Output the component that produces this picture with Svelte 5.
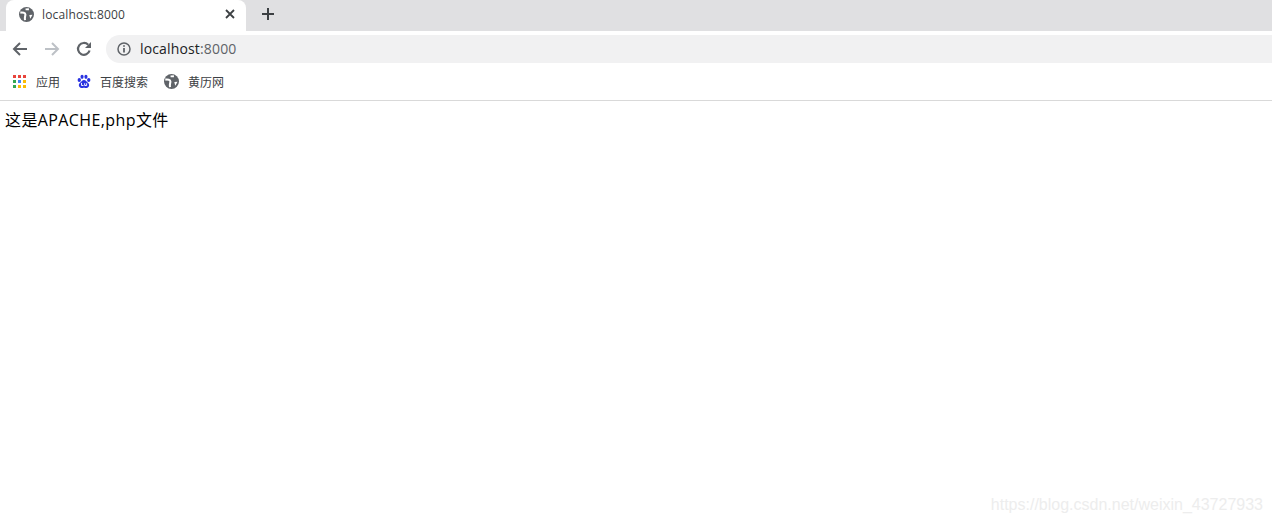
<script>
  const dots = ['#e8453c','#e8453c','#e8453c','#34a853','#4285f4','#fbbc05','#34a853','#fbbc05','#fbbc05'];
</script>

{#snippet globe(size)}
  <svg class="icon" width={size} height={size} viewBox="0 0 16 16">
    <circle cx="8" cy="8" r="8" fill="#5f6368"/>
    <path d="M1.4 6 C4 5.6 6.8 6 6.8 8 C6.8 10 5.8 10.6 6.4 14" stroke="#fff" stroke-width="2.2" fill="none"/>
    <path d="M7 2.6 L10.6 2.4" stroke="#fff" stroke-width="2" fill="none"/>
    <path d="M11 8.6 L14.4 8.2 L12 12.6 Z" fill="#fff"/>
  </svg>
{/snippet}

<div class="browser">
  <div class="tabstrip">
    <div class="tab">
      {@render globe(15)}
      <span class="tabtitle">localhost:8000</span>
      <svg class="close" width="10" height="10" viewBox="0 0 10 10">
        <path d="M1 1 L9 9 M9 1 L1 9" stroke="#3c4043" stroke-width="1.8" fill="none"/>
      </svg>
    </div>
    <svg class="plus" width="12" height="12" viewBox="0 0 12 12">
      <path d="M6 0 V12 M0 6 H12" stroke="#3c4043" stroke-width="2" fill="none"/>
    </svg>
  </div>

  <div class="toolbar">
    <svg class="nav" width="16" height="16" viewBox="0 0 16 16">
      <path d="M15 8 H2 M8 2 L2 8 L8 14" stroke="#5f6368" stroke-width="2" fill="none"/>
    </svg>
    <svg class="nav" width="16" height="16" viewBox="0 0 16 16">
      <path d="M1 8 H14 M8 2 L14 8 L8 14" stroke="#bdc1c6" stroke-width="2" fill="none"/>
    </svg>
    <svg class="nav" width="16" height="16" viewBox="0 0 16 16">
      <path d="M13.6 9.5 A5.9 5.9 0 1 1 12.2 3.8" stroke="#5f6368" stroke-width="2.2" fill="none"/>
      <path d="M15 1 V7 H9 Z" fill="#5f6368"/>
    </svg>
    <div class="omnibox">
      <svg width="14" height="14" viewBox="0 0 14 14">
        <circle cx="7" cy="7" r="6" stroke="#5f6368" stroke-width="1.5" fill="none"/>
        <path d="M7 6 V10.6" stroke="#5f6368" stroke-width="1.8"/>
        <path d="M7 3.2 V4.8" stroke="#5f6368" stroke-width="1.8"/>
      </svg>
      <span class="url">localhost<span class="port">:8000</span></span>
    </div>
  </div>

  <div class="bookmarks">
    <div class="bm apps">
      <div class="grid">
        {#each dots as c}<i style:background={c}></i>{/each}
      </div>
      <span>应用</span>
    </div>
    <div class="bm baidu">
      <svg width="14" height="15" viewBox="0 0 16 16">
        <g fill="#2932e1">
          <ellipse cx="2.6" cy="6.4" rx="1.9" ry="2.3"/>
          <ellipse cx="5.8" cy="2.6" rx="1.8" ry="2.4"/>
          <ellipse cx="10.2" cy="2.6" rx="1.8" ry="2.4"/>
          <ellipse cx="13.4" cy="6.4" rx="1.9" ry="2.3"/>
          <path d="M8 6.4 C10 6.4 10.8 8.4 12.8 9.8 C15 11.6 13.6 15.6 10.8 15.4 C9.4 15.3 8.8 15 8 15 C7.2 15 6.6 15.3 5.2 15.4 C2.4 15.6 1 11.6 3.2 9.8 C5.2 8.4 6 6.4 8 6.4 Z"/>
        </g>
        <path d="M5.2 9.6 V12.6 H7.4 M8.8 10 V12.6 H11 V10" stroke="#fff" stroke-width="1.1" fill="none"/>
      </svg>
      <span>百度搜索</span>
    </div>
    <div class="bm almanac">
      {@render globe(15)}
      <span>黄历网</span>
    </div>
  </div>

  <main class="page">这是APACHE,php文件</main>
</div>

<div class="watermark">https://blog.csdn.net/weixin_43727933</div>

<style>
  :global(body) {
    margin: 0;
    background: #fff;
    overflow: hidden;
  }
  .browser {
    height: 523px;
    font-family: "Open Sans", "Noto Sans CJK SC", sans-serif;
    color: #3c4043;
  }
  .tabstrip {
    height: 31px;
    background: #e0e0e2;
    display: flex;
    align-items: flex-start;
    padding-left: 6px;
    box-sizing: border-box;
  }
  .tab {
    width: 240px;
    height: 31px;
    box-sizing: border-box;
    background: #fff;
    border-radius: 8px 8px 0 0;
    display: flex;
    align-items: center;
    padding: 0 11px 3px 13px;
  }
  .tabtitle {
    font-size: 12px;
    letter-spacing: 0.15px;
    margin-left: 8px;
    flex: 1;
  }
  .plus {
    margin: 8px 0 0 16px;
  }
  .toolbar {
    height: 34px;
    display: flex;
    align-items: center;
    box-sizing: border-box;
    padding: 1px 0 0 12px;
  }
  .nav {
    margin-right: 16px;
    flex: none;
  }
  .nav:nth-child(3) {
    margin-right: 14px;
  }
  .omnibox {
    flex: 1;
    height: 28px;
    background: #f1f1f2;
    border-radius: 14px 0 0 14px;
    display: flex;
    align-items: center;
    padding-left: 11px;
  }
  .url {
    font-size: 14px;
    letter-spacing: 0.15px;
    margin-left: 9px;
    color: #202124;
  }
  .port {
    color: #5f6368;
  }
  .bookmarks {
    height: 36px;
    border-bottom: 1px solid #d9d9d9;
    box-sizing: border-box;
    display: flex;
    align-items: center;
    padding-bottom: 2px;
    font-size: 12px;
  }
  .bm {
    display: flex;
    align-items: center;
    gap: 9px;
  }
  .apps {
    margin-left: 13px;
    gap: 10px;
  }
  .baidu {
    margin-left: 17px;
  }
  .almanac {
    margin-left: 16px;
    gap: 9px;
  }
  .grid {
    display: grid;
    grid-template-columns: repeat(3, 3px);
    grid-auto-rows: 3px;
    gap: 2px;
    width: 13px;
  }
  .page {
    font-family: "Open Sans", "Noto Sans CJK SC", sans-serif;
    font-size: 16px;
    letter-spacing: 0.4px;
    color: #000;
    padding: 10px 0 0 5px;
    line-height: 19px;
  }
  .watermark {
    position: absolute;
    right: 9px;
    bottom: 9px;
    font-family: "Liberation Sans", sans-serif;
    font-size: 16px;
    line-height: 18px;
    color: #ededed;
  }
</style>
